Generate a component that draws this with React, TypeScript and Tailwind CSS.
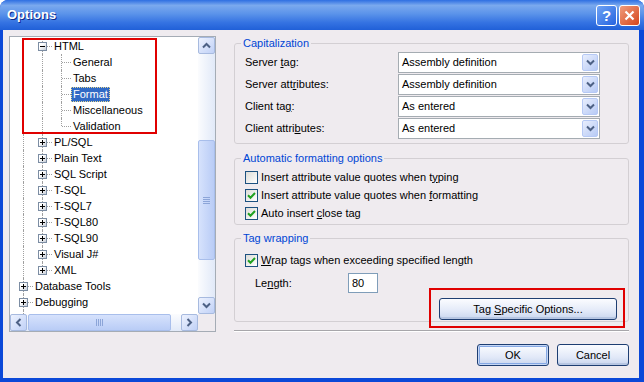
import React from "react";

type Dir = "up" | "down" | "left" | "right";

const rotClass: Record<Dir, string> = {
  down: "",
  up: "rotate-180",
  left: "rotate-90",
  right: "-rotate-90",
};

function Chevron({ dir = "down" }: { dir?: Dir }) {
  return (
    <svg width="9" height="7" viewBox="0 0 9 7" className={rotClass[dir]}>
      <path d="M1 1.5 L4.5 5 L8 1.5" stroke="#4D6185" strokeWidth="2" fill="none" />
    </svg>
  );
}

function ScrollBtn({ dir }: { dir: Dir }) {
  return (
    <div className="w-[17px] h-[17px] shrink-0 rounded-[2px] border border-[#A7BADF] bg-[linear-gradient(135deg,#EDF2FE,#C0D1F7)] flex items-center justify-center">
      <Chevron dir={dir} />
    </div>
  );
}

function Box({ sign }: { sign: "+" | "-" }) {
  return (
    <div className="absolute left-[5px] top-[4px] w-[9px] h-[9px] border border-[#7C8DA3] bg-[linear-gradient(135deg,#ffffff_35%,#C6CCD6)]">
      <div className="absolute left-[1px] top-[3px] w-[5px] h-px bg-black" />
      {sign === "+" && <div className="absolute left-[3px] top-[1px] w-px h-[5px] bg-black" />}
    </div>
  );
}

function Col({ vert, horiz, box }: { vert: "full" | "top" | "none"; horiz?: boolean; box?: "+" | "-" }) {
  return (
    <div className="relative w-[19px] h-full shrink-0">
      {vert === "full" && <div className="absolute left-[9px] top-0 h-full border-l border-dotted border-[#A0A0A0]" />}
      {vert === "top" && <div className="absolute left-[9px] top-0 h-[8px] border-l border-dotted border-[#A0A0A0]" />}
      {horiz && <div className="absolute left-[10px] right-0 top-[8px] border-t border-dotted border-[#A0A0A0]" />}
      {box && <Box sign={box} />}
    </div>
  );
}

type Row = { label: string; level: 1 | 2 | 3; box?: "+" | "-"; last?: boolean; selected?: boolean };

const rows: Row[] = [
  { label: "HTML", level: 2, box: "-" },
  { label: "General", level: 3 },
  { label: "Tabs", level: 3 },
  { label: "Format", level: 3, selected: true },
  { label: "Miscellaneous", level: 3 },
  { label: "Validation", level: 3, last: true },
  { label: "PL/SQL", level: 2, box: "+" },
  { label: "Plain Text", level: 2, box: "+" },
  { label: "SQL Script", level: 2, box: "+" },
  { label: "T-SQL", level: 2, box: "+" },
  { label: "T-SQL7", level: 2, box: "+" },
  { label: "T-SQL80", level: 2, box: "+" },
  { label: "T-SQL90", level: 2, box: "+" },
  { label: "Visual J#", level: 2, box: "+" },
  { label: "XML", level: 2, box: "+", last: true },
  { label: "Database Tools", level: 1, box: "+" },
  { label: "Debugging", level: 1, box: "+" },
  { label: "", level: 1, box: "+" },
];

function TreeRow({ r }: { r: Row }) {
  const cols: React.ReactNode[] = [];
  for (let c = 1; c <= r.level; c++) {
    if (c < r.level) {
      cols.push(<Col key={c} vert="full" />);
    } else {
      cols.push(<Col key={c} vert={r.last ? "top" : "full"} horiz box={r.box} />);
    }
  }
  return (
    <div className="h-[16px] flex items-center shrink-0">
      <div className="flex h-full">{cols}</div>
      {r.label && (
        <span
          className={
            r.selected
              ? "h-[15px] leading-[13px] px-[1px] border border-dotted border-[#E8D890] bg-[#316AC5] text-white whitespace-nowrap"
              : "h-[15px] leading-[13px] px-[1px] border border-transparent whitespace-nowrap"
          }
        >
          {r.label}
        </span>
      )}
    </div>
  );
}

function Tree() {
  return (
    <div className="w-[207px] h-[296px] shrink-0 border border-[#A5ACB5] bg-white flex flex-col">
      <div className="flex h-[277px]">
        <div className="relative w-[188px] h-full overflow-hidden pt-[1px] pl-[4px] flex flex-col">
          {rows.map((r, i) => (
            <TreeRow key={i} r={r} />
          ))}
          <div className="absolute left-[12px] top-[1px] w-[135px] h-[96px] border-2 border-[#E00000] pointer-events-none" />
        </div>
        <div className="w-[17px] h-full flex flex-col bg-[linear-gradient(90deg,#FBFCFE,#E1E9F8)]">
          <ScrollBtn dir="up" />
          <div className="flex-1 flex flex-col">
            <div className="h-[86px]" />
            <div className="h-[120px] rounded-[2px] border border-[#A8BEEB] bg-[linear-gradient(90deg,#D6E2FC,#B9CCF6)] flex flex-col items-center justify-center gap-[1px]">
              <div className="w-[7px] h-px bg-[#8CA5D8]" />
              <div className="w-[7px] h-px bg-[#8CA5D8]" />
              <div className="w-[7px] h-px bg-[#8CA5D8]" />
              <div className="w-[7px] h-px bg-[#8CA5D8]" />
            </div>
          </div>
          <ScrollBtn dir="down" />
        </div>
      </div>
      <div className="flex h-[17px]">
        <div className="w-[188px] h-full flex bg-[linear-gradient(180deg,#FBFCFE,#E1E9F8)]">
          <ScrollBtn dir="left" />
          <div className="flex-1 flex pl-[1px]">
            <div className="w-[143px] h-full rounded-[2px] border border-[#A8BEEB] bg-[linear-gradient(180deg,#D6E2FC,#B9CCF6)] flex items-center justify-center gap-[1px]">
              <div className="w-px h-[7px] bg-[#8CA5D8]" />
              <div className="w-px h-[7px] bg-[#8CA5D8]" />
              <div className="w-px h-[7px] bg-[#8CA5D8]" />
              <div className="w-px h-[7px] bg-[#8CA5D8]" />
            </div>
          </div>
          <ScrollBtn dir="right" />
        </div>
        <div className="w-[17px] h-full bg-[#EFEBEF]" />
      </div>
    </div>
  );
}

function Combo({ value }: { value: string }) {
  return (
    <div className="h-[21px] w-[202px] border border-[#A5ACB2] bg-white flex items-center">
      <span className="flex-1 pl-[3px]">{value}</span>
      <div className="w-[16px] h-[17px] mr-[1px] rounded-[2px] border border-[#B6C9F5] bg-[linear-gradient(135deg,#E8EEFD,#B7CAF5)] flex items-center justify-center">
        <Chevron />
      </div>
    </div>
  );
}

function Check({ checked }: { checked: boolean }) {
  return (
    <div className="w-[13px] h-[13px] shrink-0 border border-[#1C5180] bg-[linear-gradient(135deg,#DCDCD7,#ffffff)] flex items-center justify-center">
      {checked && (
        <svg width="9" height="9" viewBox="0 0 9 9">
          <path d="M1 4.2 L3.5 6.7 L8 2" stroke="#21A121" strokeWidth="2" fill="none" />
        </svg>
      )}
    </div>
  );
}

function CheckRow({ checked, children }: { checked: boolean; children: React.ReactNode }) {
  return (
    <div className="h-[18px] flex items-center gap-[3px]">
      <Check checked={checked} />
      <span>{children}</span>
    </div>
  );
}

function Legend({ children }: { children: React.ReactNode }) {
  return <legend className="ml-[6px] px-[2px] leading-[13px] text-[#0046D5]">{children}</legend>;
}

function XPButton({ children, def, w }: { children: React.ReactNode; def?: boolean; w: string }) {
  return (
    <div
      className={
        (def
          ? "shadow-[inset_0_0_0_1px_#C6D7F5,inset_0_0_0_2px_#85A8E4] "
          : "shadow-[inset_0_-2px_0_#B7C6E2] ") +
        w +
        " h-[22px] rounded-[3px] border border-[#1E3E72] bg-[linear-gradient(180deg,#FBFCFF,#E2E9F8_60%,#C9D6EE)] flex items-center justify-center"
      }
    >
      <span className="whitespace-pre">{children}</span>
    </div>
  );
}

export default function App() {
  return (
    <div className="w-[644px] h-[382px] flex flex-col bg-[#0B48D8] rounded-t-[8px] overflow-hidden text-[11px] text-black [font-family:'Liberation_Sans',Arial,sans-serif]">
      {/* Title bar */}
      <div className="h-[30px] shrink-0 flex items-center pl-[7px] pr-[4px] bg-[linear-gradient(180deg,#2E6FE2_0%,#7AA9EE_18%,#5C94EA_45%,#3573E2_75%,#2060D8_100%)]">
        <span className="flex-1 text-white font-bold text-[13px] [text-shadow:1px_1px_0_#0F2A8A]">Options</span>
        <div className="flex gap-[2px]">
          <div className="w-[21px] h-[21px] rounded-[3px] border border-white bg-[linear-gradient(135deg,#6FA3F4,#2563E0)] flex items-center justify-center text-white font-bold text-[15px] leading-none">
            ?
          </div>
          <div className="w-[21px] h-[21px] rounded-[3px] border border-white bg-[linear-gradient(135deg,#F09C7C,#D5461D)] flex items-center justify-center">
            <svg width="11" height="11" viewBox="0 0 11 11">
              <path d="M1.5 1.5 L9.5 9.5 M9.5 1.5 L1.5 9.5" stroke="white" strokeWidth="2.2" />
            </svg>
          </div>
        </div>
      </div>

      {/* Body */}
      <div className="flex-1 ml-[3px] mr-[5px] mb-[4px] bg-[#EFEBEF] flex pl-[6px] pt-[6px] gap-[18px]">
        <Tree />

        <div className="w-[395px] flex flex-col">
          <fieldset className="mt-[1px] border border-[#D3CFD3] rounded-[3px]">
            <Legend>Capitalization</Legend>
            <div className="pl-[10px] pt-[2px] pb-[4px] flex flex-col gap-[1px]">
              <div className="h-[21px] flex items-center">
                <span className="w-[153px]">Server <u>t</u>ag:</span>
                <Combo value="Assembly definition" />
              </div>
              <div className="h-[21px] flex items-center">
                <span className="w-[153px]">Server att<u>r</u>ibutes:</span>
                <Combo value="Assembly definition" />
              </div>
              <div className="h-[21px] flex items-center">
                <span className="w-[153px]">Client ta<u>g</u>:</span>
                <Combo value="As entered" />
              </div>
              <div className="h-[21px] flex items-center">
                <span className="w-[153px]">Client attri<u>b</u>utes:</span>
                <Combo value="As entered" />
              </div>
            </div>
          </fieldset>

          <fieldset className="mt-[8px] border border-[#D3CFD3] rounded-[3px]">
            <Legend>Automatic formatting options</Legend>
            <div className="pl-[10px] pt-[3px] pb-[2px] flex flex-col">
              <CheckRow checked={false}>
                Insert attribute value quotes when t<u>y</u>ping
              </CheckRow>
              <CheckRow checked>
                Insert attribute value quotes when <u>f</u>ormatting
              </CheckRow>
              <CheckRow checked>
                Auto insert <u>c</u>lose tag
              </CheckRow>
            </div>
          </fieldset>

          <fieldset className="mt-[7px] border border-[#D3CFD3] rounded-[3px]">
            <Legend>Tag wrapping</Legend>
            <div className="pl-[10px] pr-[11px] pt-[6px] pb-[1px] flex flex-col">
              <CheckRow checked>
                <u>W</u>rap tags when exceeding specified length
              </CheckRow>
              <div className="mt-[4px] h-[20px] flex items-center">
                <span className="ml-[10px] w-[93px]">
                  Le<u>n</u>gth:
                </span>
                <div className="w-[30px] h-[20px] border border-[#7F9DB9] bg-white flex items-center pl-[3px]">80</div>
              </div>
              <div className="mt-[5px] flex justify-end">
                <div className="relative">
                  <XPButton w="w-[178px]">
                    Tag <u>S</u>pecific Options...
                  </XPButton>
                  <div className="absolute -left-[10px] -right-[8px] -top-[10px] -bottom-[8px] border-2 border-[#E00000] pointer-events-none" />
                </div>
              </div>
            </div>
          </fieldset>

          <div className="mt-[8px] border-t border-t-[#A7A6AA] border-b border-b-white" />

          <div className="mt-[12px] flex justify-end gap-[8px]">
            <XPButton def w="w-[72px]">
              OK
            </XPButton>
            <XPButton w="w-[72px]">Cancel</XPButton>
          </div>
        </div>
      </div>
    </div>
  );
}
